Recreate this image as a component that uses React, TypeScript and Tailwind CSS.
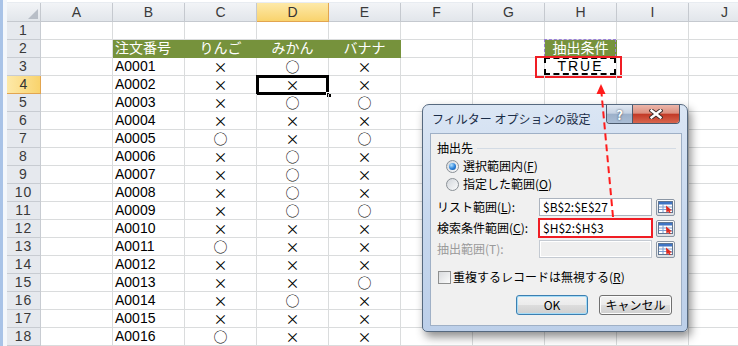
import React from 'react';

const COLS = ['A', 'B', 'C', 'D', 'E', 'F', 'G', 'H', 'I', 'J'];

// 注文番号, りんご, みかん, バナナ (rows 3..18)
const orders: [string, string, string, string][] = [
  ['A0001', '×', '○', '×'],
  ['A0002', '×', '×', '×'],
  ['A0003', '×', '○', '○'],
  ['A0004', '×', '×', '×'],
  ['A0005', '○', '×', '○'],
  ['A0006', '×', '○', '×'],
  ['A0007', '×', '○', '×'],
  ['A0008', '×', '○', '×'],
  ['A0009', '×', '○', '○'],
  ['A0010', '×', '×', '×'],
  ['A0011', '○', '×', '×'],
  ['A0012', '×', '×', '×'],
  ['A0013', '×', '×', '○'],
  ['A0014', '×', '○', '×'],
  ['A0015', '×', '×', '×'],
  ['A0016', '○', '×', '×'],
];

const headers: Record<string, string> = { B: '注文番号', C: 'りんご', D: 'みかん', E: 'バナナ', H: '抽出条件' };

function ColHeader({ label }: { label: string }) {
  if (label === 'D') {
    return (
      <div className="flex items-center justify-center border-r border-b border-[#e2a550] bg-gradient-to-b from-[#fde9a8] to-[#f9d36c] text-[14px] text-[#333]">
        {label}
      </div>
    );
  }
  return (
    <div className="flex items-center justify-center border-r border-b border-[#c5c9cf] bg-gradient-to-b from-[#f2f4f7] to-[#e2e6eb] text-[14px] text-[#3a3a3a]">
      {label}
    </div>
  );
}

function RowHeader({ n }: { n: number }) {
  if (n === 4) {
    return (
      <div className="flex items-center justify-center border-r border-b border-[#e2a550] bg-gradient-to-r from-[#fde9a8] to-[#f9d36c] text-[14px] text-[#333]">
        {n}
      </div>
    );
  }
  return (
    <div className="flex items-center justify-center border-r border-b border-[#c8ccd2] bg-[#e6e9ee] text-[14px] text-[#3a3a3a] tracking-[1px]">
      {n}
    </div>
  );
}

function Cell({ row, col }: { row: number; col: string }) {
  if (row === 2 && headers[col]) {
    return (
      <div
        className={
          col === 'B'
            ? 'relative flex items-center border-r border-b border-[#76923c] bg-[#76923c] pl-[2px] text-[14px] text-white'
            : 'relative flex items-center justify-center border-r border-b border-[#76923c] bg-[#76923c] text-[14px] text-white'
        }
      >
        {headers[col]}
        {col === 'H' && (
          <div className="absolute -left-px -top-px right-0 bottom-0 border-t border-l border-r border-dashed border-[#9a80d6]" />
        )}
      </div>
    );
  }

  if (row === 3 && col === 'H') {
    return (
      <div className="relative flex items-center justify-center border-r border-b border-[#dadcdd] text-[14px] tracking-[2px] text-black">
        TRUE
        <div className="absolute -left-px -top-px right-0 bottom-0 border-2 border-dashed border-black" />
        <div className="absolute -left-[10px] -top-[2px] -right-[6px] -bottom-[3px] border-2 border-[#f01d24]" />
      </div>
    );
  }

  const item = row >= 3 ? orders[row - 3] : undefined;
  let text = '';
  if (item) {
    if (col === 'B') text = item[0];
    if (col === 'C') text = item[1];
    if (col === 'D') text = item[2];
    if (col === 'E') text = item[3];
  }

  return (
    <div
      className={
        col === 'B'
          ? 'relative flex items-center border-r border-b border-[#dadcdd] pl-[2px] text-[14px] text-black'
          : "relative flex items-center justify-center border-r border-b border-[#dadcdd] font-['Noto_Sans_CJK_JP',sans-serif] text-[14px] text-black"
      }
    >
      {text}
      {row === 4 && col === 'D' && (
        <>
          <div className="absolute -left-px -top-px h-[20px] w-[73px] border-[3px] border-black" />
          <div className="absolute left-[69px] top-[16px] h-[6px] w-[6px] border border-white bg-black" />
        </>
      )}
    </div>
  );
}

function RangeButton() {
  return (
    <div className="flex h-[17px] w-[19px] items-center justify-center rounded-[2px] border border-[#8b96a4] bg-gradient-to-b from-[#fdfdfd] to-[#dcdfe3]">
      <svg width="15" height="12" viewBox="0 0 15 12">
        <rect x="0.5" y="0.5" width="14" height="11" fill="#fff" stroke="#5f7591" />
        <rect x="1" y="1" width="13" height="2.5" fill="#3f74c4" />
        <line x1="1" y1="6" x2="14" y2="6" stroke="#7d9fd1" />
        <line x1="1" y1="8.5" x2="14" y2="8.5" stroke="#7d9fd1" />
        <line x1="5" y1="3" x2="5" y2="11" stroke="#7d9fd1" />
        <polygon points="8,4.5 14,9.5 11.6,9.8 13,12 11.4,12 10.2,10.3 8.4,11.5" fill="#e0281e" />
      </svg>
    </div>
  );
}

function Radio({ checked }: { checked?: boolean }) {
  return (
    <span className="flex h-[13px] w-[13px] items-center justify-center rounded-full border border-[#8a9096] bg-gradient-to-br from-[#d2d6db] to-[#fbfbfb]">
      {checked && (
        <span className="h-[7px] w-[7px] rounded-full bg-[radial-gradient(circle_at_35%_30%,#b3e2ff,#2a80d8_55%,#0d4a96)]" />
      )}
    </span>
  );
}

function FilterDialog() {
  return (
    <div className="absolute left-[422px] top-[104px] flex h-[228px] w-[266px] flex-col rounded-t-[7px] rounded-b-[5px] border border-[#56697f] bg-gradient-to-b from-[#dbe6f4] via-[#c7d8ee] to-[#bccfe9] font-['Noto_Sans_CJK_JP',sans-serif] shadow-[3px_5px_10px_rgba(0,0,0,0.45)]">
      {/* Title bar */}
      <div className="flex h-[28px] items-start">
        <div className="self-center pl-[9px] text-[12px] text-[#1a2d48]">フィルター オプションの設定</div>
        <div className="ml-auto mr-[7px] flex rounded-b-[4px] border border-t-0 border-[#4b5a6d]">
          <div className="flex h-[18px] w-[26px] items-center justify-center rounded-bl-[3px] border-r border-[#4b5a6d] bg-[linear-gradient(#e1e8f2_0%,#c5d2e3_45%,#9cb0ca_52%,#aabdd5_100%)] text-[13px] font-bold text-white [text-shadow:0_0_2px_#2c3a4c]">
            ?
          </div>
          <div className="flex h-[18px] w-[46px] items-center justify-center rounded-br-[3px] bg-[linear-gradient(#ecb6aa_0%,#dc8f7f_45%,#c23a27_52%,#d8664f_100%)]">
            <svg width="14" height="10" viewBox="0 0 14 10">
              <path d="M2.5 1.5 L11.5 8.5 M11.5 1.5 L2.5 8.5" stroke="#3b2a28" strokeWidth="4.2" strokeLinecap="square" />
              <path d="M2.5 1.5 L11.5 8.5 M11.5 1.5 L2.5 8.5" stroke="#fff" strokeWidth="2.4" strokeLinecap="square" />
            </svg>
          </div>
        </div>
      </div>

      {/* Body */}
      <div className="ml-[7px] mr-[5px] flex h-[193px] flex-col border border-[#9fb0c6] bg-[#f0f0f0] text-[12px] text-black">
        <div className="mt-[6px] flex h-[16px] items-center pl-[6px]">
          <span>抽出先</span>
          <span className="ml-[4px] mr-[5px] h-px flex-1 bg-[#d3dbe4]" />
        </div>
        <div className="mt-px flex h-[18px] items-center gap-[4px] pl-[15px]">
          <Radio checked />
          <span>
            選択範囲内(<span className="underline">F</span>)
          </span>
        </div>
        <div className="flex h-[18px] items-center gap-[4px] pl-[15px]">
          <Radio />
          <span>
            指定した範囲(<span className="underline">O</span>)
          </span>
        </div>

        <div className="mt-[5px] grid grid-cols-[98px_113px_19px] items-center gap-x-[4px] gap-y-[3px] pl-[6px]">
          <span>
            リスト範囲(<span className="underline">L</span>):
          </span>
          <div className="flex h-[18px] items-center border border-[#abb3be] bg-white pl-[3px]">$B$2:$E$27</div>
          <RangeButton />

          <span>
            検索条件範囲(<span className="underline">C</span>):
          </span>
          <div className="relative flex h-[18px] items-center border border-[#abb3be] bg-white pl-[3px]">
            $H$2:$H$3
            <div className="absolute -left-[2px] -top-[2px] -right-[2px] -bottom-[2px] border-2 border-[#f01d24]" />
          </div>
          <RangeButton />

          <span className="text-[#9a9a9a]">抽出範囲(T):</span>
          <div className="h-[18px] border border-[#c4cad2] bg-[#efefef] shadow-[inset_0_0_0_1px_#fff]" />
          <RangeButton />
        </div>

        <div className="mt-[11px] flex h-[16px] items-center gap-[2px] pl-[7px]">
          <span className="h-[13px] w-[13px] border border-[#8e8f8f] bg-gradient-to-br from-[#d9dbde] to-[#fbfbfb]" />
          <span>
            重複するレコードは無視する(<span className="underline">R</span>)
          </span>
        </div>

        <div className="mt-[10px] flex gap-[11px] pl-[85px]">
          <div className="flex h-[20px] w-[72px] items-center justify-center rounded-[3px] border border-[#3c7fb1] bg-[linear-gradient(#f2f2f2_0%,#ebebeb_50%,#dddddd_50%,#cfcfcf_100%)] shadow-[inset_0_0_0_1px_#a6dcf7]">
            OK
          </div>
          <div className="flex h-[20px] w-[73px] items-center justify-center rounded-[3px] border border-[#707070] bg-[linear-gradient(#f2f2f2_0%,#ebebeb_50%,#dddddd_50%,#cfcfcf_100%)] shadow-[inset_0_0_0_1px_#fcfcfc]">
            キャンセル
          </div>
        </div>
      </div>
    </div>
  );
}

export default function App() {
  const rows = Array.from({ length: 18 }, (_, i) => i + 1);

  return (
    <div className="relative flex h-[346px] w-[738px] overflow-hidden bg-white font-['Liberation_Sans','Noto_Sans_CJK_JP',sans-serif] leading-none">
      {/* window edge */}
      <div className="w-[3px] shrink-0 bg-[#a9c3e7]" />
      <div className="w-[4px] shrink-0 bg-[#f4f7fb]" />

      <div className="flex min-w-0 flex-col">
        {/* formula bar edge */}
        <div className="h-[3px] bg-white" />
        <div className="h-px bg-[#a3acb7]" />
        <div className="h-px bg-[#e8ecf1]" />

        <div className="grid grid-cols-[34px_repeat(10,72px)] grid-rows-[19px_repeat(18,18px)]">
          <div className="flex items-end justify-end border-r border-b border-[#c5c9cf] bg-gradient-to-b from-[#f2f4f7] to-[#e2e6eb] p-[2px]">
            <svg width="10" height="10" viewBox="0 0 10 10">
              <polygon points="10,0 10,10 0,10" fill="#b8bec7" />
            </svg>
          </div>
          {COLS.map((c) => (
            <ColHeader key={c} label={c} />
          ))}

          {rows.map((r) => (
            <React.Fragment key={r}>
              <RowHeader n={r} />
              {COLS.map((c) => (
                <Cell key={c} row={r} col={c} />
              ))}
            </React.Fragment>
          ))}
        </div>
      </div>

      <FilterDialog />

      {/* dashed pointer from criteria range to H3 */}
      <svg className="pointer-events-none absolute left-0 top-0" width="738" height="346">
        <line x1="613" y1="217" x2="601.5" y2="93" stroke="#ff1c1c" strokeWidth="2" strokeDasharray="7 4" />
        <polygon points="601,84 596.5,94 605.5,94" fill="#ff1c1c" />
      </svg>
    </div>
  );
}
